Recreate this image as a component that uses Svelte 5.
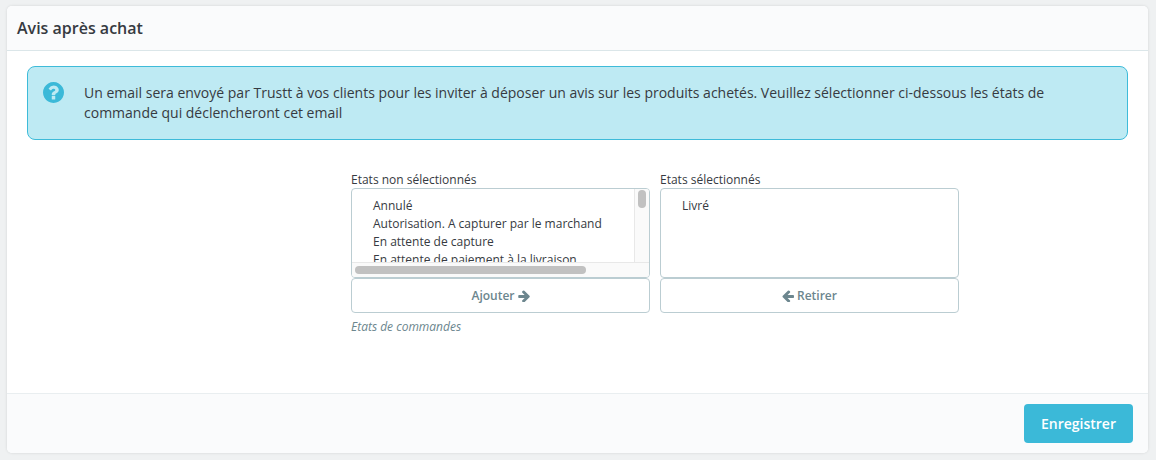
<script>
	const available = [
		'Annulé',
		'Autorisation. A capturer par le marchand',
		'En attente de capture',
		'En attente de paiement à la livraison'
	];
	const selected = ['Livré'];
</script>

<div class="page">
	<section class="panel">
		<header class="panel-head">Avis après achat</header>

		<div class="panel-body">
			<div class="alert">
				<svg class="alert-icon" viewBox="128 128 1536 1536" width="21" height="21" aria-hidden="true">
					<path
						d="M1024 1376v-192q0-14-9-23t-23-9h-192q-14 0-23 9t-9 23v192q0 14 9 23t23 9h192q14 0 23-9t9-23zm256-672q0-88-55.500-163t-138.500-116-170-41q-243 0-371 213-15 24 8 42l132 100q7 6 19 6 16 0 25-12 53-68 86-92 34-24 86-24 48 0 85.500 26t37.500 59q0 38-20 61t-68 45q-63 28-115.500 86.500t-52.500 125.500v36q0 14 9 23t23 9h192q14 0 23-9t9-23q0-19 21.500-49.500t54.500-49.500q32-18 49-28.500t46-35 44.500-48 28-60.500 12.500-81zm384 192q0 209-103 385.500t-279.500 279.500-385.500 103-385.500-103-279.500-279.500-103-385.500 103-385.500 279.500-279.500 385.500-103 385.500 103 279.500 279.500 103 385.500z"
						fill="#3bb9d8"
					/>
				</svg>
				<p>
					Un email sera envoyé par Trustt à vos clients pour les inviter à déposer un avis sur les
					produits achetés. Veuillez sélectionner ci-dessous les états de commande qui déclencheront
					cet email
				</p>
			</div>

			<div class="swap">
				<div class="col">
					<div class="label">Etats non sélectionnés</div>
					<div class="listbox">
						<ul>
							{#each available as item}
								<li>{item}</li>
							{/each}
						</ul>
						<div class="track-v"><span class="thumb-v"></span></div>
						<div class="track-h"><span class="thumb-h"></span></div>
					</div>
					<button class="move">
						Ajouter
						<svg viewBox="128 128 1472 1536" width="12" height="12" aria-hidden="true">
							<path
								d="M1600 960q0 54-37 91l-651 651q-39 37-91 37-52 0-90-37l-75-75q-38-38-38-91t38-91l293-293h-704q-52 0-84.500-37.500t-32.500-90.500v-128q0-53 32.500-90.500t84.500-37.500h704l-293-294q-38-36-38-90t38-90l75-75q38-38 90-38 53 0 91 38l651 651q37 35 37 90z"
								fill="#6c868e"
							/>
						</svg>
					</button>
					<div class="help">Etats de commandes</div>
				</div>

				<div class="col">
					<div class="label">Etats sélectionnés</div>
					<div class="listbox">
						<ul>
							{#each selected as item}
								<li>{item}</li>
							{/each}
						</ul>
					</div>
					<button class="move">
						<svg viewBox="128 128 1536 1536" width="12" height="12" aria-hidden="true">
							<path
								d="M1664 896v128q0 53-32.500 90.500t-84.500 37.500h-704l293 294q38 36 38 90t-38 90l-75 76q-38 38-90 38-53 0-91-38l-651-652q-37-37-37-90 0-52 37-91l651-650q38-38 91-38 52 0 90 38l75 74q38 38 38 91t-38 91l-293 293h704q52 0 84.500 37.500t32.500 90.500z"
								fill="#6c868e"
							/>
						</svg>
						Retirer
					</button>
				</div>
			</div>
		</div>

		<footer class="panel-foot">
			<button class="save">Enregistrer</button>
		</footer>
	</section>
</div>

<style>
	:global(body) {
		background: #eff1f2;
		font-family: 'Open Sans', sans-serif;
		color: #363a41;
	}

	.page {
		padding: 6px 8px 7px 7px;
		height: 460px;
		box-sizing: border-box;
	}

	.panel {
		background: #fff;
		border-radius: 5px;
		box-shadow: 0 0 3px rgba(0, 0, 0, 0.12);
		height: 447px;
		display: flex;
		flex-direction: column;
		overflow: hidden;
	}

	.panel-head {
		height: 45px;
		box-sizing: border-box;
		padding: 0 10px;
		line-height: 44px;
		font-size: 16px;
		font-weight: 600;
		background: #fafbfc;
		border-bottom: 1px solid #dbe6e9;
	}

	.panel-body {
		flex: 1;
		padding: 15px 20px 0;
	}

	.alert {
		display: flex;
		height: 74px;
		box-sizing: border-box;
		background: #beeaf3;
		border: 1px solid #3ebbd9;
		border-radius: 8px;
		padding: 15px 15px 13px;
		gap: 20px;
		font-size: 14px;
		line-height: 20px;
	}

	.alert-icon {
		flex: none;
	}

	.alert p {
		margin: 1px 0 0;
		padding-right: 10px;
	}

	.swap {
		display: flex;
		gap: 10px;
		margin: 29px 0 0 324px;
	}

	.col {
		width: 299px;
	}

	.label {
		font-size: 12px;
		line-height: 18px;
		height: 17px;
		margin-top: 2px;
	}

	.listbox {
		position: relative;
		height: 90px;
		box-sizing: border-box;
		border: 1px solid #bbcdd2;
		border-radius: 4px;
		overflow: hidden;
		font-size: 12px;
		line-height: 18px;
	}

	ul {
		list-style: none;
		margin: 0;
		padding: 8px 0 0 21px;
		white-space: nowrap;
	}

	.track-v {
		position: absolute;
		top: 0;
		right: 0;
		bottom: 14px;
		width: 14px;
		background: #fafafa;
		border-left: 1px solid #e8e8e8;
	}

	.thumb-v {
		position: absolute;
		top: 1px;
		left: 3px;
		width: 8px;
		height: 18px;
		border-radius: 4px;
		background: #c1c1c1;
	}

	.track-h {
		position: absolute;
		left: 0;
		right: 0;
		bottom: 0;
		height: 14px;
		background: #fafafa;
		border-top: 1px solid #e8e8e8;
	}

	.thumb-h {
		position: absolute;
		top: 3px;
		left: 3px;
		width: 231px;
		height: 8px;
		border-radius: 4px;
		background: #c1c1c1;
	}

	.move {
		display: flex;
		align-items: center;
		justify-content: center;
		gap: 3px;
		width: 100%;
		height: 35px;
		padding: 0;
		background: #fff;
		border: 1px solid #bbcdd2;
		border-radius: 4px;
		color: #6c868e;
		font-family: inherit;
		font-size: 12px;
		font-weight: 600;
	}

	.help {
		margin-top: 5px;
		font-size: 12px;
		line-height: 18px;
		font-style: italic;
		color: #6c868e;
	}

	.panel-foot {
		height: 60px;
		box-sizing: border-box;
		display: flex;
		justify-content: flex-end;
		align-items: flex-start;
		padding: 10px 15px 0 0;
		background: #fafbfc;
		border-top: 1px solid #e9eef0;
	}

	.save {
		width: 109px;
		height: 39px;
		padding: 0;
		background: #3bb9d8;
		border: 0;
		border-radius: 4px;
		color: #fff;
		font-family: inherit;
		font-size: 14px;
		font-weight: 600;
	}
</style>
